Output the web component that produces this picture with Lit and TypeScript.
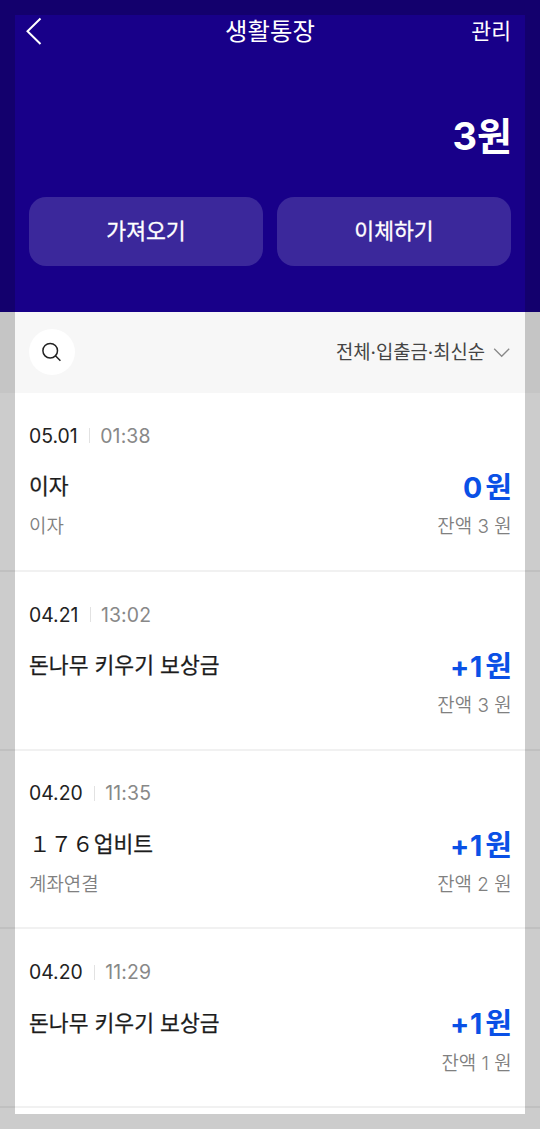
import { LitElement, html, css, nothing } from "lit";
import { customElement, property } from "lit/decorators.js";

interface Entry {
  date: string;
  time: string;
  wide?: string;
  title: string;
  memo?: string;
  sign: string;
  amount: string;
  balance: string;
}

const ENTRIES: Entry[] = [
  { date: "05.01", time: "01:38", title: "이자", memo: "이자", sign: "", amount: "0", balance: "3" },
  { date: "04.21", time: "13:02", title: "돈나무 키우기 보상금", sign: "+", amount: "1", balance: "3" },
  { date: "04.20", time: "11:35", wide: "１７６", title: "업비트", memo: "계좌연결", sign: "+", amount: "1", balance: "2" },
  { date: "04.20", time: "11:29", title: "돈나무 키우기 보상금", sign: "+", amount: "1", balance: "1" },
];

@customElement("entry-row")
export class EntryRow extends LitElement {
  @property({ attribute: false }) entry!: Entry;

  static styles = css`
    :host {
      display: block;
      box-sizing: border-box;
      height: 178.77px;
      padding: 27.8px 29px 0;
      border-bottom: 2px solid #f1f1f1;
    }
    .when {
      display: flex;
      align-items: center;
      height: 30px;
      font-size: 19.4px;
      line-height: 30px;
      color: #222;
    }
    .bar {
      width: 1px;
      height: 15px;
      margin: 0 10px 0 11.5px;
      background: #e2e2e2;
    }
    .time {
      color: #888;
      letter-spacing: 0.15px;
    }
    .line {
      display: flex;
      justify-content: space-between;
      align-items: center;
      white-space: nowrap;
    }
    .main {
      height: 40px;
      margin-top: 15.7px;
      line-height: 40px;
    }
    .title {
      font-size: 21.55px;
      font-weight: 400;
      -webkit-text-stroke: 0.25px #1c1c1c;
      color: #1c1c1c;
    }
    .wide {
      -webkit-text-stroke-width: 0;
    }
    .amount {
      display: flex;
      align-items: baseline;
      margin-right: -1px;
      padding-top: 3px;
      font-size: 29px;
      font-weight: 700;
      color: #0a50e6;
    }
    .number {
      margin-right: 2.5px;
      font-size: 28.5px;
      letter-spacing: 0.6px;
      font-feature-settings: "calt" 0;
    }
    .sub {
      height: 28px;
      margin-top: 7px;
      font-size: 18.9px;
      line-height: 28px;
      font-weight: 350;
      color: #808080;
    }
    .balance {
      margin-right: -0.6px;
    }
  `;

  render() {
    const e = this.entry;
    return html`
      <div class="when">
        <span>${e.date}</span><span class="bar"></span><span class="time">${e.time}</span>
      </div>
      <div class="line main">
        <span class="title">${e.wide ? html`<span class="wide">${e.wide}</span>` : nothing}${e.title}</span>
        <span class="amount"><span class="number">${e.sign}${e.amount}</span><span>원</span></span>
      </div>
      <div class="line sub"><span>${e.memo ?? ""}</span><span class="balance">잔액 ${e.balance} 원</span></div>
    `;
  }
}

@customElement("app-root")
export class AppRoot extends LitElement {
  static styles = css`
    :host {
      display: block;
      position: relative;
      height: 1129px;
      overflow: hidden;
      background: #fff;
      font-family: Inter, "Noto Sans CJK KR", sans-serif;
    }
    .head {
      box-sizing: border-box;
      height: 312px;
      padding: 11px 29px 0;
      background: #180089;
      color: #fff;
    }
    .nav {
      display: grid;
      grid-template-columns: 1fr auto 1fr;
      align-items: center;
      height: 40px;
      line-height: 40px;
    }
    .back {
      display: block;
      margin-left: -4px;
    }
    .name {
      font-size: 24.4px;
    }
    .manage {
      justify-self: end;
      font-size: 21.6px;
    }
    .total {
      height: 60px;
      margin-top: 55px;
      margin-right: -1px;
      font-size: 38px;
      line-height: 60px;
      font-weight: 700;
      text-align: right;
    }
    .actions {
      display: grid;
      grid-template-columns: 1fr 1fr;
      gap: 14px;
      margin-top: 31px;
    }
    .action {
      height: 69px;
      border-radius: 17px;
      background: #3b289b;
      font-size: 21.6px;
      font-weight: 400;
      -webkit-text-stroke: 0.3px #fff;
      line-height: 69px;
      text-align: center;
    }
    .tools {
      display: flex;
      box-sizing: border-box;
      align-items: center;
      justify-content: space-between;
      height: 81px;
      padding: 0 29px 1px;
      background: #f7f7f7;
    }
    .find {
      display: grid;
      place-items: center;
      width: 46px;
      height: 46px;
      border-radius: 50%;
      background: #fff;
    }
    .sort {
      display: flex;
      align-items: center;
      gap: 8px;
      padding-top: 2px;
      font-size: 18.8px;
      line-height: 30px;
      color: #444;
    }
    .frame {
      position: absolute;
      inset: 0;
      border: 15px solid rgba(0, 0, 0, 0.2);
      pointer-events: none;
    }
  `;

  render() {
    return html`
      <div class="head">
        <div class="nav">
          <svg class="back" width="18" height="28" viewBox="0 0 18 28" fill="none" stroke="#fff" stroke-width="2">
            <path d="M15.5 1.5 2.5 14.2 15.5 27" />
          </svg>
          <span class="name">생활통장</span>
          <span class="manage">관리</span>
        </div>
        <div class="total">3원</div>
        <div class="actions">
          <div class="action">가져오기</div>
          <div class="action">이체하기</div>
        </div>
      </div>
      <div class="tools">
        <div class="find">
          <svg width="20" height="20" viewBox="0 0 20 20" fill="none" stroke="#222" stroke-width="1.5">
            <circle cx="8.2" cy="8.7" r="7.3" />
            <path d="M13.4 13.8 18.4 18.8" />
          </svg>
        </div>
        <div class="sort">
          <span>전체·입출금·최신순</span>
          <svg width="18" height="12" viewBox="0 0 18 12" fill="none" stroke="#888" stroke-width="1.3">
            <path d="M1.2 1.8 8.7 9.3 16.2 1.8" />
          </svg>
        </div>
      </div>
      ${ENTRIES.map((e) => html`<entry-row .entry=${e}></entry-row>`)}
      <div class="frame"></div>
    `;
  }
}
